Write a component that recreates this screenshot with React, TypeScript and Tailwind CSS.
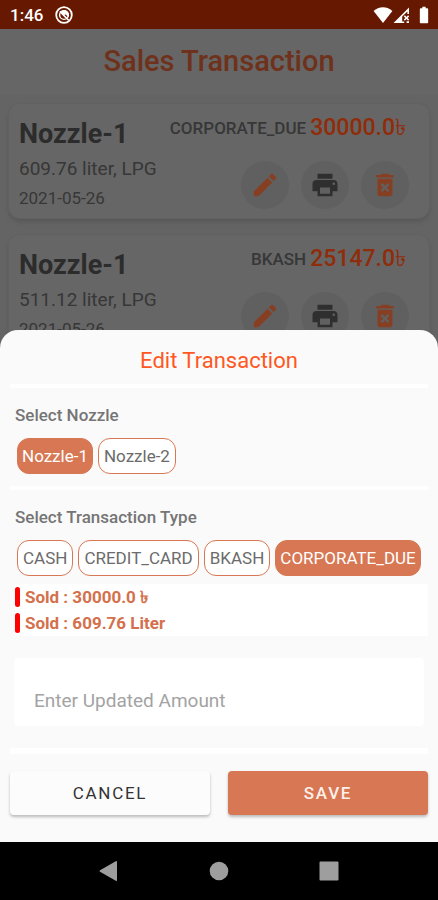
import React, { useState } from 'react';
import { MdBatteryFull, MdDeleteForever, MdEdit, MdPrint } from 'react-icons/md';

interface Transaction {
  id: number;
  nozzle: string;
  liters: string;
  fuel: string;
  date: string;
  type: string;
  amount: string;
}

const transactions: Transaction[] = [
  { id: 1, nozzle: 'Nozzle-1', liters: '609.76', fuel: 'LPG', date: '2021-05-26', type: 'CORPORATE_DUE', amount: '30000.0' },
  { id: 2, nozzle: 'Nozzle-1', liters: '511.12', fuel: 'LPG', date: '2021-05-26', type: 'BKASH', amount: '25147.0' },
];

const nozzles = ['Nozzle-1', 'Nozzle-2'];
const types = ['CASH', 'CREDIT_CARD', 'BKASH', 'CORPORATE_DUE'];

const StatusBar: React.FC = () => (
  <header className="flex h-[29px] shrink-0 items-center justify-between bg-[#661900] pr-1 pl-2.5 text-white">
    <div className="flex items-center gap-3">
      <span className="text-[17px] leading-6 font-medium">1:46</span>
      <svg viewBox="0 0 18 18" className="h-[18px] w-[18px]" fill="none" stroke="currentColor">
        <circle cx="9" cy="9" r="7.8" strokeWidth="1.8" />
        <circle cx="9" cy="9" r="4.4" strokeWidth="1.4" />
        <path d="M5.6 6.2A4.4 4.4 0 0 1 13.2 11.2L10.8 8.6 9 9Z" fill="currentColor" stroke="none" />
        <path d="M4.8 5.4L13.6 14.2" strokeWidth="1.6" />
      </svg>
    </div>
    <div className="flex items-center">
      <svg viewBox="0 0 20 16" className="h-4 w-5" fill="currentColor">
        <path d="M10 16L.6 4C3 1.6 6.4.2 10 .2S17 1.6 19.4 4Z" />
      </svg>
      <svg viewBox="0 0 17 16" className="h-4 w-[17px]" fill="currentColor">
        <path fillRule="evenodd" d="M.5 16L16 .4V7h-1.6V4.4L9.2 9.6V16ZM9.2 16v-1.5h2V16Z" />
        <path d="M10.8 9.4l1.1-1.1 1.6 1.6 1.6-1.6 1.1 1.1-1.6 1.6 1.6 1.6-1.1 1.1-1.6-1.6-1.6 1.6-1.1-1.1 1.6-1.6ZM13.6 14.2H16V16h-2.4Z" />
      </svg>
      <MdBatteryFull className="ml-1 h-5 w-5" />
    </div>
  </header>
);

const iconButton = 'flex h-12 w-12 items-center justify-center rounded-full bg-[#a0a0a0]';

const TransactionCard: React.FC<{ item: Transaction }> = ({ item }) => (
  <article className="flex h-[116px] justify-between rounded-xl border border-[#a2a2a2] bg-[#aaaaaa] pr-5 pl-2.5 shadow-md">
    <div className="pt-3">
      <h2 className="text-[27px] leading-9 font-bold text-[#4a4a4a]">{item.nozzle}</h2>
      <p className="text-[19px] leading-[34px] text-[#5c5c5c]">{item.liters} liter, {item.fuel}</p>
      <p className="text-[17px] leading-6 text-[#5c5c5c]">{item.date}</p>
    </div>
    <div className="flex flex-col items-end pt-2">
      <p className="flex items-center gap-1 leading-8">
        <span className="text-[17px] font-medium text-[#5c5c5c]">{item.type}</span>
        <span className="pr-[3px] text-[23px] font-medium text-[#ee4a12]">{item.amount}৳</span>
      </p>
      <div className="mt-[17px] flex gap-3">
        <button className={iconButton} aria-label="Edit">
          <MdEdit className="h-[30px] w-[30px] text-[#e06a3a]" />
        </button>
        <button className={iconButton} aria-label="Print">
          <MdPrint className="h-[30px] w-[30px] text-[#4f4f4f]" />
        </button>
        <button className={iconButton} aria-label="Delete">
          <MdDeleteForever className="h-[30px] w-[30px] text-[#e06a3a]" />
        </button>
      </div>
    </div>
  </article>
);

interface ChipGroupProps {
  label: string;
  options: string[];
  value: string;
  onChange: (value: string) => void;
}

const ChipGroup: React.FC<ChipGroupProps> = ({ label, options, value, onChange }) => (
  <div role="group" aria-label={label} className="px-[5px]">
    <h3 className="text-[17px] leading-6 font-medium text-[#757575]">{label}</h3>
    <div className="mt-[11px] flex gap-[5px] pl-0.5">
      {options.map((option) => (
        <button
          key={option}
          aria-pressed={option === value}
          onClick={() => onChange(option)}
          className={`h-9 rounded-xl border border-[#d87753] pt-0.5 text-[17px] ${
            option === value ? 'bg-[#d87753] px-1 text-white' : 'bg-white px-[5px] text-[#6b6b6b]'
          }`}
        >
          {option}
        </button>
      ))}
    </div>
  </div>
);

const EditSheet: React.FC = () => {
  const [nozzle, setNozzle] = useState('Nozzle-1');
  const [type, setType] = useState('CORPORATE_DUE');
  const [amount, setAmount] = useState('');

  return (
    <section className="absolute inset-x-0 bottom-0 rounded-t-[18px] bg-[#fafafa] px-2.5 pt-[15px] pb-[27px]">
      <h2 className="text-center text-[22px] leading-8 text-[#ff5722]">Edit Transaction</h2>
      <div className="mt-[7px] mb-[15px] h-1 bg-white" />
      <ChipGroup label="Select Nozzle" options={nozzles} value={nozzle} onChange={setNozzle} />
      <div className="mt-3 mb-[15px] h-1 bg-white" />
      <ChipGroup label="Select Transaction Type" options={types} value={type} onChange={setType} />

      <div className="mt-2 ml-[5px] bg-white text-[17px] leading-[26px] font-bold text-[#d4704b]">
        <p className="flex items-center gap-[5px]">
          <span className="h-5 w-[5px] rounded-sm bg-[#ff0000]" />
          Sold : 30000.0 ৳
        </p>
        <p className="flex items-center gap-[5px]">
          <span className="h-5 w-[5px] rounded-sm bg-[#ff0000]" />
          Sold : 609.76 Liter
        </p>
      </div>

      <input
        type="text"
        aria-label="Enter Updated Amount"
        placeholder="Enter Updated Amount"
        value={amount}
        onChange={(e) => setAmount(e.target.value)}
        className="mx-1 mt-[22px] block h-[68px] w-[calc(100%-8px)] rounded bg-white px-5 pt-4 text-[19px] text-gray-700 outline-none placeholder:text-[#a3a3a3]"
      />

      <div className="mt-[22px] mb-[17px] h-1.5 bg-white" />
      <div className="grid grid-cols-2 gap-[18px]">
        <button className="h-11 rounded bg-[#fcfcfc] pt-0.5 text-[17px] tracking-widest text-[#333333] shadow-[0_2px_3px_rgba(0,0,0,0.25)]">CANCEL</button>
        <button className="h-11 rounded bg-[#d87753] pt-0.5 text-[17px] font-medium tracking-widest text-[#fff0ea] shadow-[0_2px_3px_rgba(0,0,0,0.25)]">SAVE</button>
      </div>
    </section>
  );
};

const NavBar: React.FC = () => (
  <nav className="flex h-[58px] shrink-0 items-center justify-center gap-[90px] bg-black text-[#9e9e9e]">
    <button aria-label="Back">
      <svg viewBox="0 0 20 20" className="h-5 w-5" fill="currentColor">
        <path d="M18 .8V19.2a.8.8 0 0 1-1.2.6L1 10.7a.8.8 0 0 1 0-1.4L16.8.2A.8.8 0 0 1 18 .8Z" />
      </svg>
    </button>
    <button aria-label="Home">
      <svg viewBox="0 0 20 20" className="h-5 w-5" fill="currentColor">
        <circle cx="10" cy="10" r="9.3" />
      </svg>
    </button>
    <button aria-label="Recent apps">
      <svg viewBox="0 0 20 20" className="h-5 w-5" fill="currentColor">
        <rect x=".5" y=".5" width="19" height="19" rx="1" />
      </svg>
    </button>
  </nav>
);

const App: React.FC = () => {
  return (
    <div className="flex min-h-screen flex-col font-[Roboto,'Noto_Sans',sans-serif]">
      <StatusBar />
      <main className="relative flex-1 overflow-hidden bg-[#a7a7a7]">
        <h1 className="bg-[#aaaaaa] pt-3 pb-3.5 text-center text-[29px] leading-10 font-medium text-[#b8522f]">Sales Transaction</h1>
        <div className="space-y-[15px] px-2 pt-2">
          {transactions.map((item) => (
            <TransactionCard key={item.id} item={item} />
          ))}
        </div>
        <div className="absolute inset-0 bg-black/40" />
        <EditSheet />
      </main>
      <NavBar />
    </div>
  );
};

export default App;
